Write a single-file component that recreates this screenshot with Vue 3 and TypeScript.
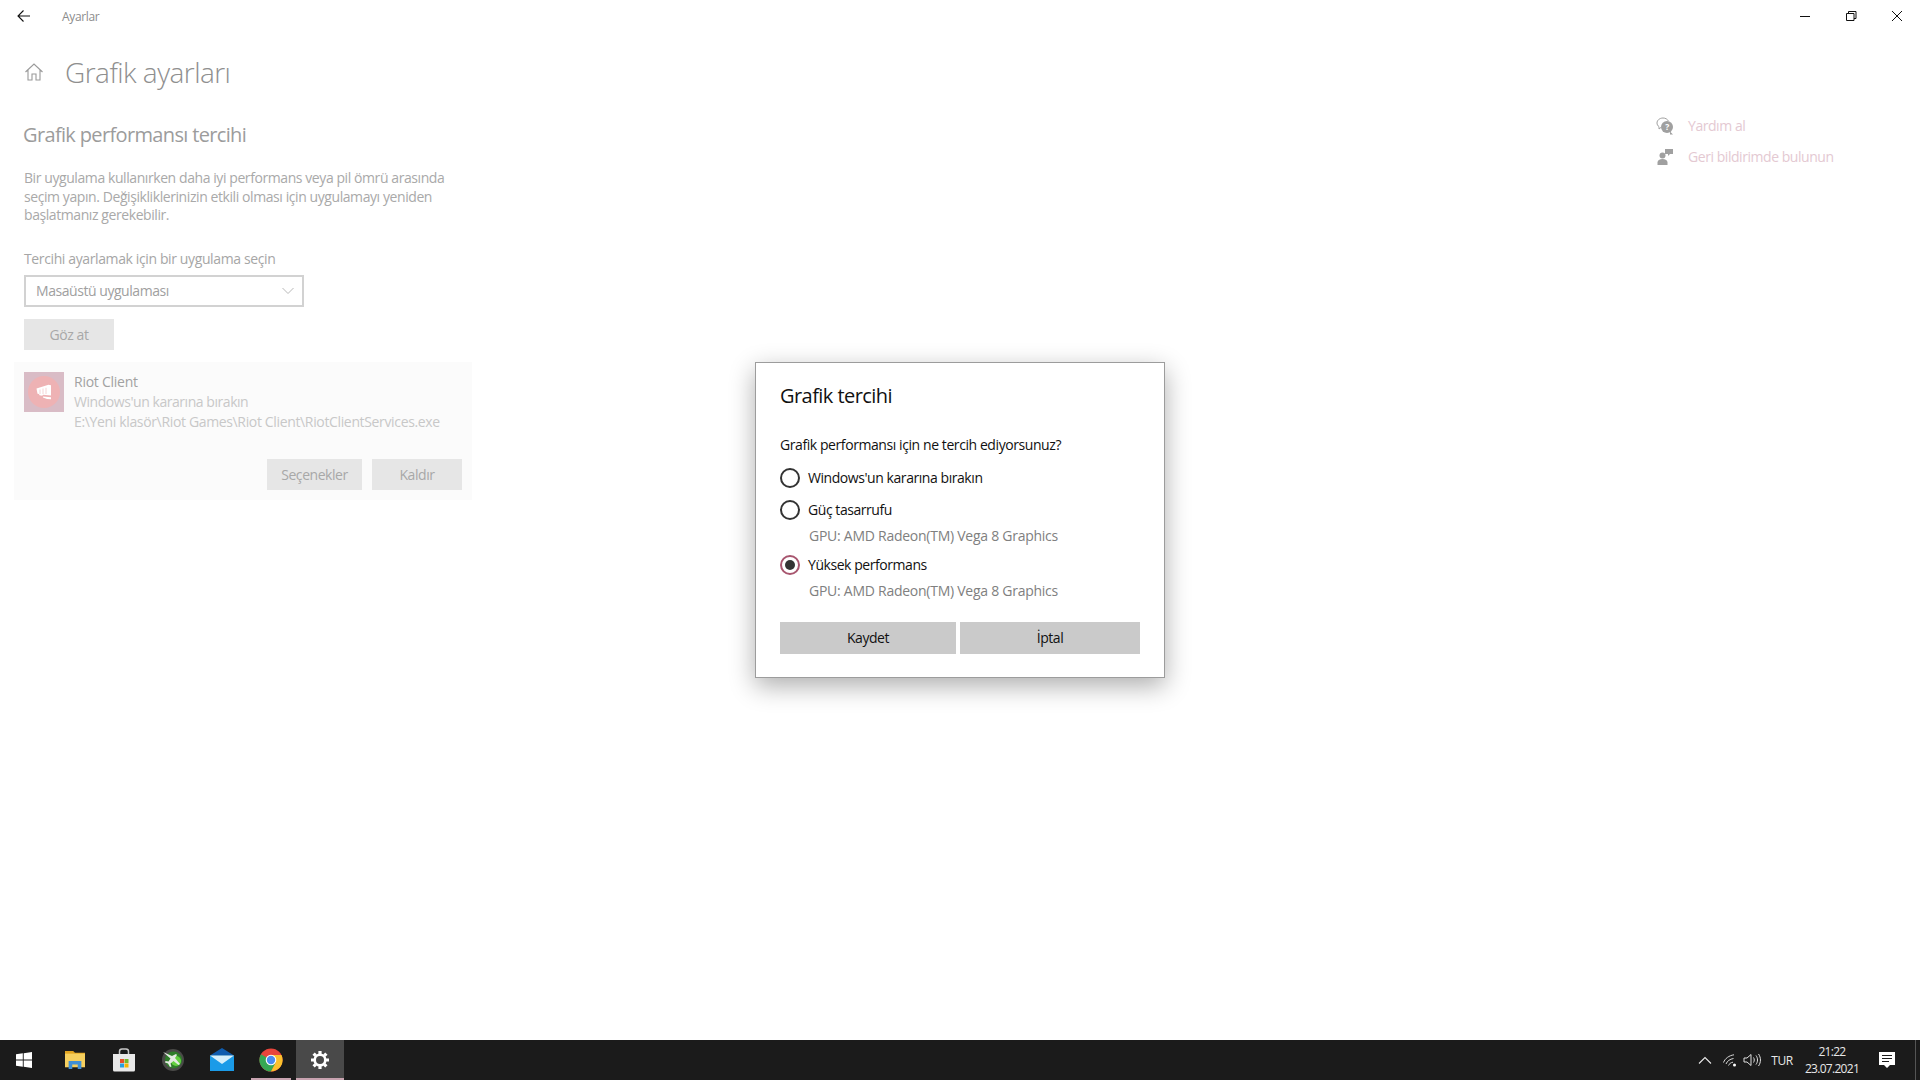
<script setup lang="ts">
const taskIcons = ['explorer', 'store', 'xbox', 'mail', 'chrome', 'settings'] as const
</script>

<template>
  <div class="screen">
    <div class="window">
      <header class="titlebar">
        <button class="back" aria-label="Geri">
          <svg width="16" height="16" viewBox="0 0 16 16"><path d="M14 8H2M7.5 2.500 2 8l5.500 5.500" fill="none" stroke="#111" stroke-width="1.100" /></svg>
        </button>
        <span class="app-name">Ayarlar</span>
        <div class="controls">
          <svg width="46" height="32" viewBox="0 0 46 32"><path d="M18 16.500h10" stroke="#111" fill="none" /></svg>
          <svg width="46" height="32" viewBox="0 0 46 32"><path d="M18.500 20.500h7.500v-7h-7.500zM20.500 13.500v-2h7.500v7h-2" stroke="#111" fill="none" /></svg>
          <svg width="46" height="32" viewBox="0 0 46 32"><path d="M18 11l10 10M28 11 18 21" stroke="#111" fill="none" /></svg>
        </div>
      </header>

      <div class="content">
        <main class="main">
          <div class="page-head">
            <svg class="home" width="20" height="20" viewBox="0 0 20 20"><path d="M1.500 10 10 2l8.500 8M4 8v10h4v-6h4v6h4V8" fill="none" stroke="#9a9a9a" stroke-width="1.100" /></svg>
            <h1>Grafik ayarları</h1>
          </div>
          <h2>Grafik performansı tercihi</h2>
          <p class="intro">Bir uygulama kullanırken daha iyi performans veya pil ömrü arasında seçim yapın. Değişikliklerinizin etkili olması için uygulamayı yeniden başlatmanız gerekebilir.</p>
          <div class="field-label">Tercihi ayarlamak için bir uygulama seçin</div>
          <div class="combo">
            <span>Masaüstü uygulaması</span>
            <svg width="12" height="8" viewBox="0 0 12 8"><path d="M.5 1 6 6.500 11.500 1" fill="none" stroke="#b8b8b8" /></svg>
          </div>
          <button class="bg-btn browse">Göz at</button>
          <section class="card">
            <div class="card-top">
              <div class="app-icon">
                <div class="riot">
                  <svg width="16" height="16" viewBox="0 0 16 16">
                    <path d="M.5 4.500 12.500.8l2.500.5v10.200l-8-.7-.7 1-2.800-.5-.5-1.200-1.500-.3z" fill="#fff" />
                    <path d="M7 12.500l8 .8v2l-4-.3-4-1.500z" fill="#fff" />
                    <path d="M4 5.500v4.500M7 4.500v5.500M10 3.800v6.200" stroke="#f3c9ca" stroke-width=".8" />
                  </svg>
                </div>
              </div>
              <div class="card-text">
                <div class="card-name">Riot Client</div>
                <div class="card-sub">Windows'un kararına bırakın</div>
                <div class="card-path">E:\Yeni klasör\Riot Games\Riot Client\RiotClientServices.exe</div>
              </div>
            </div>
            <div class="card-actions">
              <button class="bg-btn options">Seçenekler</button>
              <button class="bg-btn remove">Kaldır</button>
            </div>
          </section>
        </main>

        <aside class="aside">
          <div class="help-row">
            <svg width="18" height="18" viewBox="0 0 18 18">
              <path d="M7 1C3.700 1 1 3.200 1 6c0 1.500.8 2.800 2 3.700V12l2-1.600" fill="none" stroke="#a0a0a0" />
              <path d="M7 1c2.400 0 4.500 1.200 5.400 3" fill="none" stroke="#a0a0a0" />
              <circle cx="11" cy="10" r="6" fill="#a0a0a0" />
              <path d="M14 14.500l3 3h-3z" fill="#a0a0a0" />
              <text x="11" y="13" font-size="8.500" font-weight="700" text-anchor="middle" fill="#fff" font-family="Open Sans">?</text>
            </svg>
            <span>Yardım al</span>
          </div>
          <div class="help-row">
            <svg width="18" height="18" viewBox="0 0 18 18">
              <circle cx="6.500" cy="7.500" r="3" fill="#a0a0a0" />
              <path d="M1.500 17v-2.500c0-2 2-3.500 5-3.500s5 1.500 5 3.500V17z" fill="#a0a0a0" />
              <path d="M9 1h8v5h-3l-2 2V6H9z" fill="#a0a0a0" />
            </svg>
            <span>Geri bildirimde bulunun</span>
          </div>
        </aside>
      </div>
    </div>

    <footer class="taskbar">
      <div class="start">
        <svg width="16" height="16" viewBox="0 0 16 16"><path d="M0 2.300 6.800 1.300v6.300H0zM7.700 1.200 16 0v7.600H7.700zM0 8.500h6.800v6.300L0 13.800zM7.700 8.500H16V16l-8.300-1.200z" fill="#fff" /></svg>
      </div>
      <div v-for="name in taskIcons" :key="name" class="task" :class="[name, { running: name === 'chrome' || name === 'settings' }]">
        <svg v-if="name === 'explorer'" width="22" height="20" viewBox="0 0 24 22">
          <path d="M1 1h9l2 2h11v6H1z" fill="#e2a420" />
          <rect x="1" y="4" width="22" height="15" fill="#f6cf5e" />
          <path d="M5 21v-9h14v9h-4v-5H9v5z" fill="#3f8fd6" />
        </svg>
        <svg v-else-if="name === 'store'" width="24" height="24" viewBox="0 0 24 24">
          <path d="M7.500 6V3.500C7.500 2 8.500 1 10 1h4c1.500 0 2.500 1 2.500 2.500V6" fill="none" stroke="#c8c8c8" stroke-width="1.500" />
          <path d="M1 6h22v16a1.500 1.500 0 0 1-1.500 1.500h-19A1.500 1.500 0 0 1 1 22z" fill="#e9e9e9" />
          <rect x="8" y="11" width="4" height="4" fill="#e8502a" />
          <rect x="12.500" y="11" width="4" height="4" fill="#76b82a" />
          <rect x="8" y="15.500" width="4" height="4" fill="#2a9fe0" />
          <rect x="12.500" y="15.500" width="4" height="4" fill="#f7b500" />
        </svg>
        <svg v-else-if="name === 'xbox'" width="24" height="24" viewBox="0 0 24 24">
          <circle cx="12" cy="12" r="11" fill="#4a4a48" />
          <circle cx="12.500" cy="12" r="8.500" fill="#2f7d2a" />
          <circle cx="15" cy="13" r="5" fill="#63d13f" />
          <path d="M2 4l9 4 4-2 1 1-2 3 5 6-1.500 1-5-4-3 2.500 1 3-1.500.5-2-3.500-3-1 .5-1.500 3 .5 2-3z" fill="#e4ebe2" />
        </svg>
        <svg v-else-if="name === 'mail'" width="24" height="24" viewBox="0 0 24 24">
          <path d="M12 0 24 7.500H0z" fill="#0f5cae" />
          <path d="M0 7.500h24V23H0z" fill="#1b9be8" />
          <path d="M0 7.500 12 16 24 7.500z" fill="#d6effb" />
        </svg>
        <svg v-else-if="name === 'chrome'" width="24" height="24" viewBox="0 0 24 24">
          <circle cx="12" cy="12" r="11.500" fill="#e8453c" />
          <path d="M12 12 2 6.200A11.500 11.500 0 0 0 12 23.500l5-9z" fill="#35a853" />
          <path d="M12 7h10.500A11.500 11.500 0 0 1 12 23.500L17 14z" fill="#fbc02d" />
          <circle cx="12" cy="12" r="5.300" fill="#fff" />
          <circle cx="12" cy="12" r="4.200" fill="#4a8cf0" />
        </svg>
        <svg v-else width="20" height="20" viewBox="0 0 20 20">
          <circle cx="10" cy="10" r="5.300" fill="none" stroke="#fff" stroke-width="2.600" />
          <path d="M10 1v3M10 16v3M1 10h3M16 10h3M3.600 3.600l2.100 2.100M14.300 14.300l2.100 2.100M3.600 16.400l2.100-2.100M14.300 5.700l2.100-2.100" stroke="#fff" stroke-width="3.200" />
        </svg>
      </div>

      <div class="tray">
        <svg class="t-chev" width="14" height="8" viewBox="0 0 14 8"><path d="M1 7.500 7 1.500l6 6" fill="none" stroke="#e8e8e8" stroke-width="1.100" /></svg>
        <svg class="t-net" width="14" height="14" viewBox="0 0 14 14">
          <path d="M.5 9.500C2 5.500 6 2.500 11 1.800M3 11c1-2.800 4-5 7.500-5.500M5.500 12.500c.6-1.600 2.300-3 4.500-3.300" fill="none" stroke="#d8d8d8" />
          <circle cx="11.500" cy="12" r="1.500" fill="#fff" />
        </svg>
        <svg class="t-vol" width="18" height="14" viewBox="0 0 18 14">
          <path d="M1 5h3l4-3.500v11L4 9H1z" fill="none" stroke="#e0e0e0" />
          <path d="M10.500 4.500c1 1.500 1 3.500 0 5M13 2.500c2 2.700 2 6.300 0 9M15.500 1c2.600 3.600 2.600 8.400 0 12" fill="none" stroke="#e0e0e0" />
        </svg>
        <span class="t-lang">TUR</span>
        <div class="t-clock"><span>21:22</span><span>23.07.2021</span></div>
        <svg class="t-note" width="16" height="17" viewBox="0 0 16 17">
          <path fill-rule="evenodd" d="M0 0h16v13h-5l-3 3-3-3H0zM3 3v1h10V3zM3 6v1h10V6zM3 9v1h7V9z" fill="#fff" />
        </svg>
        <div class="t-desk"></div>
      </div>
    </footer>

    <div class="dialog" role="dialog">
      <div class="d-title">Grafik tercihi</div>
      <div class="d-question">Grafik performansı için ne tercih ediyorsunuz?</div>
      <div class="radio first"><span class="dot"></span><span class="r-label">Windows'un kararına bırakın</span></div>
      <div class="radio"><span class="dot"></span><span class="r-label">Güç tasarrufu</span></div>
      <div class="gpu">GPU: AMD Radeon(TM) Vega 8 Graphics</div>
      <div class="radio third"><span class="dot on"></span><span class="r-label">Yüksek performans</span></div>
      <div class="gpu">GPU: AMD Radeon(TM) Vega 8 Graphics</div>
      <div class="d-actions">
        <button class="d-btn save">Kaydet</button>
        <button class="d-btn cancel">İptal</button>
      </div>
    </div>
  </div>
</template>

<style>
html, body { margin: 0; background: #fff; overflow: hidden; }
</style>

<style scoped>
* { box-sizing: border-box; }
.screen {
  position: relative;
  width: 1920px;
  height: 1080px;
  display: flex;
  flex-direction: column;
  background: #fff;
  font-family: "Open Sans", "Noto Sans", sans-serif;
  font-size: 14px;
  letter-spacing: -0.45px;
  overflow: hidden;
}
button { font: inherit; letter-spacing: inherit; border: 0; padding: 0; margin: 0; }
.window { flex: 1; display: flex; flex-direction: column; min-height: 0; }
.titlebar { height: 32px; display: flex; align-items: center; flex: none; }
.back { width: 48px; height: 32px; background: none; display: flex; align-items: center; padding-left: 16px; }
.app-name { margin-left: 14px; font-size: 12px; color: #8c8c8c; letter-spacing: -0.35px; }
.controls { margin-left: auto; display: flex; }
.controls svg { display: block; }
.content { flex: 1; display: flex; justify-content: space-between; }
.main { width: 458px; margin-left: 14px; display: flex; flex-direction: column; }
.page-head { display: flex; align-items: center; height: 40px; margin-top: 20px; padding-left: 10px; }
.home { flex: none; }
h1 { margin: 0 0 0 21px; font-size: 28px; font-weight: 300; color: #8f8f8f; letter-spacing: -0.53px; line-height: 40px; }
h2 { margin: 29px 0 0 9px; font-size: 20px; font-weight: 400; color: #9c9c9c; letter-spacing: -0.65px; line-height: 28px; }
.intro { margin: 20px 0 0 10px; width: 445px; color: #a9a9a9; line-height: 18.500px; letter-spacing: -0.42px; }
.field-label { margin: 24px 0 0 10px; color: #a6a6a6; line-height: 19px; letter-spacing: -0.38px; }
.combo { margin: 7px 0 0 10px; width: 280px; height: 32px; border: 2px solid #d2d2d2; display: flex; align-items: center; justify-content: space-between; padding: 0 8px 0 10px; color: #a0a0a0; }
.bg-btn { background: #e6e6e6; color: #a8a8a8; height: 31px; display: block; }
.browse { margin: 12px 0 0 10px; width: 90px; }
.card { margin-top: 12px; height: 138px; background: #fbfbfb; padding: 10px; display: flex; flex-direction: column; }
.card-top { display: flex; gap: 10px; }
.app-icon { width: 40px; height: 40px; background: #d9bcc6; display: flex; align-items: center; justify-content: center; }
.riot { width: 32px; height: 32px; border-radius: 50%; background: #eeb2b4; display: flex; align-items: center; justify-content: center; }
.card-text { line-height: 20px; }
.card-name { color: #a2a2a2; letter-spacing: -0.25px; }
.card-sub { color: #c8c8c8; letter-spacing: -0.45px; }
.card-path { color: #c8c8c8; letter-spacing: -0.35px; }
.card-actions { margin-top: auto; display: flex; justify-content: flex-end; gap: 10px; }
.options { width: 95px; }
.remove { width: 90px; }
.aside { width: 264px; padding-top: 78px; }
.help-row { display: flex; align-items: center; height: 31px; gap: 14px; color: #e4c9d2; }
.taskbar { height: 40px; flex: none; background: #1b1b1b; display: flex; align-items: stretch; }
.start { width: 50px; padding-right: 2px; display: flex; align-items: center; justify-content: center; }
.task { width: 49px; display: flex; align-items: center; justify-content: center; position: relative; }
.task.settings { background: #494949; width: 48px; margin-left: 1px; }
.task.running::after { content: ""; position: absolute; left: 5px; right: 4px; bottom: 0; height: 2px; background: #c8a3b0; }
.task.settings.running::after { left: 0; right: 0; }
.tray { margin-left: auto; display: flex; align-items: center; color: #e8e8e8; font-size: 12px; }
.t-chev { margin-right: 11px; }
.t-net { margin-right: 6px; }
.t-vol { margin-right: 9px; }
.t-lang { width: 24px; text-align: center; margin-right: 9px; letter-spacing: -0.5px; }
.t-clock { width: 58px; display: flex; flex-direction: column; align-items: center; line-height: 17px; letter-spacing: -0.7px; }
.t-note { margin-left: 18px; margin-right: 20px; }
.t-desk { width: 1px; height: 40px; background: #555; margin-right: 4px; }
.dialog {
  position: absolute;
  left: 755px;
  top: 362px;
  width: 410px;
  height: 316px;
  background: #fff;
  border: 1px solid #9c9c9c;
  box-shadow: 0 8px 24px rgba(0, 0, 0, .32);
  padding: 19px 24px 0;
  color: #111;
}
.d-title { font-size: 20px; line-height: 28px; letter-spacing: -0.55px; }
.d-question { margin-top: 25px; line-height: 20px; letter-spacing: -0.42px; }
.radio { display: flex; align-items: center; gap: 8px; height: 20px; letter-spacing: -0.44px; margin-top: 12px; }
.radio.first { margin-top: 13px; }
.radio.third { margin-top: 9px; }
.r-label { margin-top: -2px; }
.dot { width: 20px; height: 20px; border: 2px solid #333; border-radius: 50%; display: flex; align-items: center; justify-content: center; flex: none; }
.dot.on { border-color: #a8566f; }
.dot.on::before { content: ""; width: 10px; height: 10px; border-radius: 50%; background: #333; }
.gpu { margin: 6px 0 0 29px; color: #808080; line-height: 20px; letter-spacing: -0.26px; }
.d-actions { display: flex; gap: 4px; margin-top: 21px; }
.d-btn { height: 32px; background: #cacaca; color: #111; padding-bottom: 1px; }
.save { width: 176px; }
.cancel { width: 180px; }
</style>
